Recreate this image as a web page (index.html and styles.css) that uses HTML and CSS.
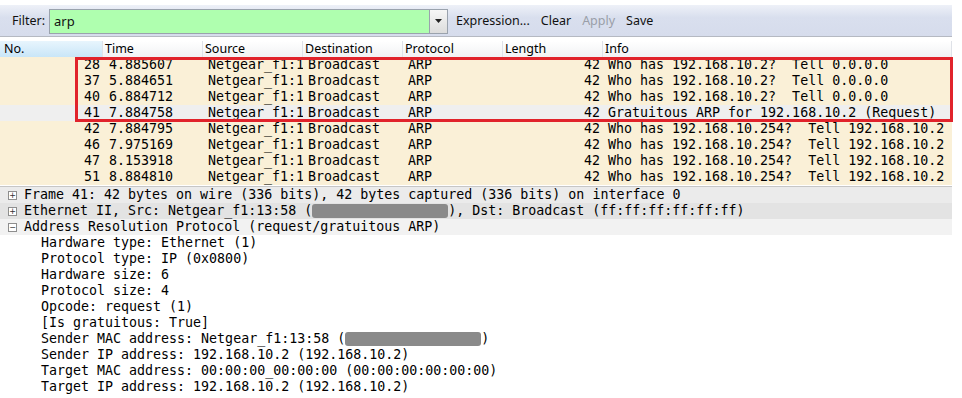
FILE: index.html
```html
<!DOCTYPE html>
<html lang="en">
<head>
    <meta charset="UTF-8">
    <title>arp - Wireshark</title>
    <link rel="stylesheet" href="styles.css">
</head>
<body>

<div class="app">
    <div class="toolbar">
        <span class="label">Filter:</span>
        <div class="filter">
            <span class="filter-text">arp</span>
            <span class="drop"><svg width="8" height="5" viewBox="0 0 8 5"><path d="M0 0h7L3.5 4z" fill="#222"/></svg></span>
        </div>
        <span class="tool">Expression...</span>
        <span class="tool">Clear</span>
        <span class="tool off">Apply</span>
        <span class="tool">Save</span>
    </div>

    <div class="list">
        <div class="head">
            <div class="sorted">No.</div>
            <div>Time</div>
            <div>Source</div>
            <div>Destination</div>
            <div>Protocol</div>
            <div>Length</div>
            <div>Info</div>
        </div>
        <div class="row"><span class="num">28</span><span>4.885607</span><span>Netgear_f1:1</span><span>Broadcast</span><span>ARP</span><span class="num">42</span><span>Who has 192.168.10.2?  Tell 0.0.0.0</span></div>
        <div class="row"><span class="num">37</span><span>5.884651</span><span>Netgear_f1:1</span><span>Broadcast</span><span>ARP</span><span class="num">42</span><span>Who has 192.168.10.2?  Tell 0.0.0.0</span></div>
        <div class="row"><span class="num">40</span><span>6.884712</span><span>Netgear_f1:1</span><span>Broadcast</span><span>ARP</span><span class="num">42</span><span>Who has 192.168.10.2?  Tell 0.0.0.0</span></div>
        <div class="row selected"><span class="num">41</span><span>7.884758</span><span>Netgear_f1:1</span><span>Broadcast</span><span>ARP</span><span class="num">42</span><span>Gratuitous ARP for 192.168.10.2 (Request)</span></div>
        <div class="row"><span class="num">42</span><span>7.884795</span><span>Netgear_f1:1</span><span>Broadcast</span><span>ARP</span><span class="num">42</span><span>Who has 192.168.10.254?  Tell 192.168.10.2</span></div>
        <div class="row"><span class="num">46</span><span>7.975169</span><span>Netgear_f1:1</span><span>Broadcast</span><span>ARP</span><span class="num">42</span><span>Who has 192.168.10.254?  Tell 192.168.10.2</span></div>
        <div class="row"><span class="num">47</span><span>8.153918</span><span>Netgear_f1:1</span><span>Broadcast</span><span>ARP</span><span class="num">42</span><span>Who has 192.168.10.254?  Tell 192.168.10.2</span></div>
        <div class="row"><span class="num">51</span><span>8.884810</span><span>Netgear_f1:1</span><span>Broadcast</span><span>ARP</span><span class="num">42</span><span>Who has 192.168.10.254?  Tell 192.168.10.2</span></div>
        <!-- highlight drawn over the four gratuitous rows -->
        <div class="mark"></div>
    </div>

    <div class="detail">
        <div class="node n1"><span class="box">+</span>Frame 41: 42 bytes on wire (336 bits), 42 bytes captured (336 bits) on interface 0</div>
        <div class="node n2"><span class="box">+</span>Ethernet II, Src: Netgear_f1:13:58 (<span class="hide"></span>), Dst: Broadcast (ff:ff:ff:ff:ff:ff)</div>
        <div class="node n3"><span class="box">&minus;</span>Address Resolution Protocol (request/gratuitous ARP)</div>
        <div class="leaf">Hardware type: Ethernet (1)</div>
        <div class="leaf">Protocol type: IP (0x0800)</div>
        <div class="leaf">Hardware size: 6</div>
        <div class="leaf">Protocol size: 4</div>
        <div class="leaf">Opcode: request (1)</div>
        <div class="leaf">[Is gratuitous: True]</div>
        <div class="leaf">Sender MAC address: Netgear_f1:13:58 (<span class="hide"></span>)</div>
        <div class="leaf">Sender IP address: 192.168.10.2 (192.168.10.2)</div>
        <div class="leaf">Target MAC address: 00:00:00_00:00:00 (00:00:00:00:00:00)</div>
        <div class="leaf">Target IP address: 192.168.10.2 (192.168.10.2)</div>
    </div>
</div>

</body>
</html>
```

FILE: styles.css
```css
body {
    margin: 0;
    background-color: white;
    font-family: "Noto Sans", "Liberation Sans", sans-serif;
}
.app {
    width: 952px;
}

/* filter toolbar */
.toolbar {
    height: 31px;
    margin-top: 5px;
    display: flex;
    align-items: center;
    background: linear-gradient(#eef1f8, #d9dfee 40%, #d6dcec);
    border-bottom: 1px solid #b5b9c2;
    font-size: 12.5px;
    color: #111;
}
.label {
    margin-left: 12px;
    width: 37px;
}
.filter {
    width: 399px;
    height: 25px;
    margin-top: 2px;
    display: flex;
    border: 1px solid #9aa2ad;
    background-color: #afffaf;
    box-sizing: border-box;
}
.filter-text {
    flex: 1;
    padding-left: 4px;
    line-height: 23px;
    font-size: 13px;
}
.drop {
    width: 17px;
    display: flex;
    align-items: center;
    justify-content: center;
    border-left: 1px solid #9aa2ad;
    background: linear-gradient(#f6f6f6, #dcdcdc);
}
.tool {
    margin-left: 8px;
    margin-right: 3px;
}
.tool:first-of-type {
    margin-left: 7px;
}
.off {
    color: #9a9ea8;
}

/* packet list */
.list {
    position: relative;
    margin-top: 4px;
}
.head {
    display: grid;
    grid-template-columns: 103px 100px 100px 100px 100px 100px 1fr;
    height: 16px;
    font-size: 12.5px;
    line-height: 16px;
    background: linear-gradient(#ffffff, #f1f2f4);
}
.head div {
    padding-left: 2px;
    border-right: 1px solid #dfe2e8;
}
.head .sorted {
    background: linear-gradient(#e8f5fd, #c9e6f8);
    padding-left: 4px;
}
.row {
    display: grid;
    grid-template-columns: 103px 100px 100px 100px 100px 100px 1fr;
    height: 16px;
    line-height: 16px;
    font-family: "DejaVu Sans Mono", monospace;
    font-size: 13.3px;
    background-color: #faf0d7;
    white-space: pre;
    color: #000;
}
.row span {
    overflow: hidden;
    padding-left: 5px;
}
.row .num {
    text-align: right;
    padding-left: 0;
    padding-right: 3px;
}
.row span:nth-child(2) {
    padding-left: 6px;
}
.row.selected {
    background-color: #efefef;
}
.mark {
    position: absolute;
    left: 75px;
    top: 16px;
    width: 872px;
    height: 59px;
    border: 3px solid #e1232b;
}

/* packet details */
.detail {
    margin-top: 1px;
    border-top: 1px solid #c6c6c6;
    font-family: "DejaVu Sans Mono", monospace;
    font-size: 13.3px;
    line-height: 16px;
    color: #000;
}
.node {
    height: 16px;
    padding-left: 8px;
    display: flex;
    align-items: center;
    white-space: pre;
}
.n1 {
    background-color: #ebebeb;
}
.n2 {
    background-color: #e3e3e3;
}
.n3 {
    background-color: #f2f2f2;
}
.box {
    width: 7px;
    height: 7px;
    margin-right: 7px;
    border: 1px solid #8e8e8e;
    background-color: white;
    font-family: "DejaVu Sans", sans-serif;
    font-size: 8px;
    line-height: 7px;
    text-align: center;
    color: #333;
}
.leaf {
    height: 16px;
    padding-left: 41px;
    white-space: pre;
}
.hide {
    display: inline-block;
    width: 136px;
    height: 14px;
    vertical-align: -3px;
    border-radius: 3px;
    background-color: #8a8a8a;
}
```
